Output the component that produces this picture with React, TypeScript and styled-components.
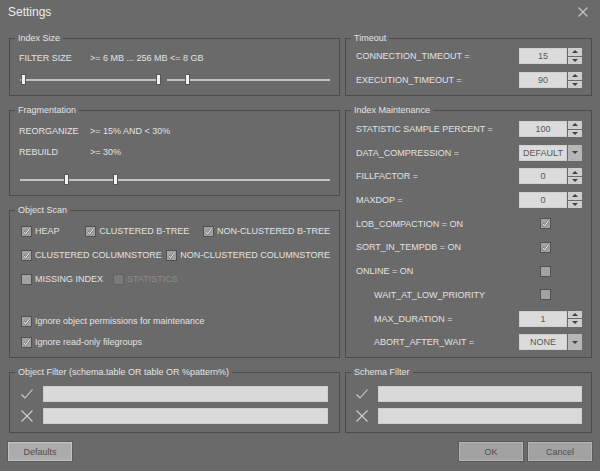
import styled, { createGlobalStyle } from 'styled-components';

const GlobalStyle = createGlobalStyle`
  html, body {
    margin: 0;
    padding: 0;
    background: #6a6a6a;
  }
  body {
    font-family: "Liberation Sans", Arial, sans-serif;
    font-size: 9px;
    color: #e2e2e2;
  }
`;

const Page = styled.div`
  width: 600px;
  height: 471px;
  display: flex;
  flex-direction: column;
  background: #6a6a6a;
`;

const TitleBar = styled.div`
  height: 24px;
  display: flex;
  align-items: center;
  justify-content: space-between;
  padding: 0 12px 0 8px;
`;

const Title = styled.div`
  font-size: 12px;
  color: #ececec;
`;

const Columns = styled.div`
  margin-top: 14px;
  padding: 0 9px;
  display: grid;
  grid-template-columns: 331px 247px;
  grid-template-rows: 58px 86px 148px 61px;
  column-gap: 5px;
  row-gap: 14px;
`;

const Group = styled.div<{ $span?: number }>`
  position: relative;
  border: 1px solid #4b4b4b;
  ${(p) => (p.$span ? `grid-row: span ${p.$span};` : '')}
`;

const Legend = styled.span`
  position: absolute;
  top: -7px;
  left: 5px;
  padding: 0 3px;
  line-height: 12px;
  background: #6a6a6a;
  color: #e4e4e4;
`;

const Body = styled.div<{ $pad: string; $gap?: number }>`
  padding: ${(p) => p.$pad};
  display: flex;
  flex-direction: column;
  gap: ${(p) => p.$gap ?? 0}px;
`;

const TextRow = styled.div`
  display: flex;
  align-items: center;
  height: 14px;
  white-space: nowrap;
`;

const RowLabel = styled.span`
  width: 71px;
`;

const SliderRow = styled.div<{ $top: number }>`
  display: flex;
  gap: 9px;
  margin-top: ${(p) => p.$top}px;
  padding-left: 1px;
`;

const Track = styled.div<{ $width?: number }>`
  position: relative;
  height: 10px;
  ${(p) => (p.$width ? `width: ${p.$width}px;` : 'flex: 1;')}
  &::before {
    content: '';
    position: absolute;
    left: 0;
    right: 0;
    top: 4px;
    height: 2px;
    background: #c2c2c2;
  }
`;

const Thumb = styled.span`
  position: absolute;
  top: 0;
  width: 3px;
  height: 9px;
  margin-left: -1px;
  background: #f2f2f2;
  box-shadow: 0 0 0 1px #575757;
`;

const Slider = ({ width, thumbs }: { width?: number; thumbs: number[] }) => (
  <Track $width={width}>
    {thumbs.map((t) => (
      <Thumb key={t} style={{ left: t }} />
    ))}
  </Track>
);

const CheckRow = styled.div<{ $top?: number }>`
  display: flex;
  align-items: center;
  height: 14px;
  padding-left: 2px;
  ${(p) => (p.$top ? `margin-top: ${p.$top}px;` : '')}
`;

const CheckItem = styled.label<{ $width?: number; $disabled?: boolean }>`
  display: flex;
  align-items: center;
  gap: 3px;
  white-space: nowrap;
  color: ${(p) => (p.$disabled ? '#8c8c8c' : '#e2e2e2')};
  ${(p) => (p.$width ? `width: ${p.$width}px;` : '')}
`;

const Box = styled.span<{ $disabled?: boolean }>`
  width: 11px;
  height: 11px;
  box-sizing: border-box;
  display: inline-flex;
  align-items: center;
  justify-content: center;
  background: ${(p) => (p.$disabled ? '#7a7a7a' : '#a2a2a2')};
  border: 1px solid ${(p) => (p.$disabled ? '#616161' : '#515151')};
  flex: none;
`;

const Check = ({ on, disabled }: { on?: boolean; disabled?: boolean }) => (
  <Box $disabled={disabled}>
    {on && (
      <svg width="9" height="9" viewBox="0 0 9 9">
        <path d="M1.5 4.6 L3.6 6.8 L7.6 1.6" fill="none" stroke="#5a5a5a" strokeWidth="2.2" />
        <path d="M1.5 4.6 L3.6 6.8 L7.6 1.6" fill="none" stroke="#e8e8e8" strokeWidth="1.1" />
      </svg>
    )}
  </Box>
);

const Checkbox = ({ label, on, disabled, width }: { label: string; on?: boolean; disabled?: boolean; width?: number }) => (
  <CheckItem $width={width} $disabled={disabled}>
    <Check on={on} disabled={disabled} />
    {label}
  </CheckItem>
);

const FilterGrid = styled.div<{ $pad: string }>`
  padding: ${(p) => p.$pad};
  display: grid;
  grid-template-columns: 20px 1fr;
  grid-auto-rows: 16px;
  column-gap: 6px;
  row-gap: 6px;
  align-items: center;
  justify-items: center;
`;

const TextInput = styled.div`
  justify-self: stretch;
  height: 16px;
  box-sizing: border-box;
  background: #dadada;
  border: 1px solid #cdcdcd;
`;

const CheckIcon = () => (
  <svg width="12" height="12" viewBox="0 0 12 12">
    <path d="M0.5 6.5 L4 10 L11.5 1.5" fill="none" stroke="#cfcfcf" strokeWidth="1.1" />
  </svg>
);

const CrossIcon = () => (
  <svg width="12" height="12" viewBox="0 0 12 12">
    <path d="M0.5 0.5 L11.5 11.5 M11.5 0.5 L0.5 11.5" fill="none" stroke="#cfcfcf" strokeWidth="1.1" />
  </svg>
);

const CloseIcon = () => (
  <svg width="10" height="10" viewBox="0 0 10 10">
    <path d="M0.5 0.5 L9.5 9.5 M9.5 0.5 L0.5 9.5" fill="none" stroke="#c8c8c8" strokeWidth="1.1" />
  </svg>
);

const ParamList = styled.div<{ $pad: string; $gap: number }>`
  padding: ${(p) => p.$pad};
  display: grid;
  grid-auto-rows: 16px;
  row-gap: ${(p) => p.$gap}px;
`;

const ParamRow = styled.div`
  display: grid;
  grid-template-columns: 1fr 63px;
  align-items: center;
`;

const ParamLabel = styled.span<{ $indent?: boolean }>`
  white-space: nowrap;
  padding-left: ${(p) => (p.$indent ? 18 : 0)}px;
`;

const Control = styled.div`
  display: flex;
  height: 16px;
  gap: 1px;
`;

const Field = styled.div`
  width: 48px;
  height: 16px;
  box-sizing: border-box;
  background: #dbdbdb;
  border: 1px solid #cfcfcf;
  color: #575757;
  display: flex;
  align-items: center;
  justify-content: center;
`;

const SpinButtons = styled.div`
  width: 14px;
  display: flex;
  flex-direction: column;
  gap: 1px;
`;

const Arrow = styled.span<{ $up?: boolean; $dark?: boolean }>`
  flex: 1;
  background: ${(p) => (p.$dark ? '#b6b6b6' : '#cdcdcd')};
  display: flex;
  align-items: center;
  justify-content: center;
  &::after {
    content: '';
    border-left: 3px solid transparent;
    border-right: 3px solid transparent;
    ${(p) => (p.$up ? 'border-bottom: 3px solid #3f3f3f;' : 'border-top: 3px solid #3f3f3f;')}
  }
`;

const CheckCell = styled.div`
  padding-left: 21px;
  display: flex;
`;

type Param =
  | { label: string; kind: 'spin' | 'select'; value: string; indent?: boolean }
  | { label: string; kind: 'check'; on: boolean; indent?: boolean };

const ParamControl = ({ p }: { p: Param }) => {
  if (p.kind === 'check') {
    return (
      <CheckCell>
        <Check on={p.on} />
      </CheckCell>
    );
  }
  return (
    <Control>
      <Field>{p.value}</Field>
      {p.kind === 'spin' ? (
        <SpinButtons>
          <Arrow $up />
          <Arrow />
        </SpinButtons>
      ) : (
        <SpinButtons>
          <Arrow $dark />
        </SpinButtons>
      )}
    </Control>
  );
};

const Footer = styled.div`
  margin-top: 9px;
  padding: 0 8px;
  display: flex;
  gap: 5px;
`;

const Button = styled.button<{ $light?: boolean }>`
  width: 64px;
  height: 19px;
  box-sizing: border-box;
  padding: 0;
  font-family: inherit;
  font-size: 9px;
  color: #4e4e4e;
  background: ${(p) => (p.$light ? '#acacac' : '#a2a2a2')};
  border: 1px solid ${(p) => (p.$light ? '#c3c3c3' : '#b4b4b4')};
  box-shadow: 0 0 0 1px #5a5a5a;
`;

const Spacer = styled.div`
  flex: 1;
`;

const timeout: Param[] = [
  { label: 'CONNECTION_TIMEOUT =', kind: 'spin', value: '15' },
  { label: 'EXECUTION_TIMEOUT =', kind: 'spin', value: '90' },
];

const maintenance: Param[] = [
  { label: 'STATISTIC SAMPLE PERCENT =', kind: 'spin', value: '100' },
  { label: 'DATA_COMPRESSION =', kind: 'select', value: 'DEFAULT' },
  { label: 'FILLFACTOR =', kind: 'spin', value: '0' },
  { label: 'MAXDOP =', kind: 'spin', value: '0' },
  { label: 'LOB_COMPACTION = ON', kind: 'check', on: true },
  { label: 'SORT_IN_TEMPDB = ON', kind: 'check', on: true },
  { label: 'ONLINE = ON', kind: 'check', on: false },
  { label: 'WAIT_AT_LOW_PRIORITY', kind: 'check', on: false, indent: true },
  { label: 'MAX_DURATION =', kind: 'spin', value: '1', indent: true },
  { label: 'ABORT_AFTER_WAIT =', kind: 'select', value: 'NONE', indent: true },
];

const App = () => {
  return (
    <Page>
      <GlobalStyle />
      <TitleBar>
        <Title>Settings</Title>
        <CloseIcon />
      </TitleBar>
      <Columns>
        <Group>
          <Legend>Index Size</Legend>
          <Body $pad="12px 9px 0 9px">
            <TextRow>
              <RowLabel>FILTER SIZE</RowLabel>
              &gt;= 6 MB ... 256 MB &lt;= 8 GB
            </TextRow>
            <SliderRow $top={10}>
              <Slider width={138} thumbs={[3, 138]} />
              <Slider thumbs={[20]} />
            </SliderRow>
          </Body>
        </Group>

        <Group>
          <Legend>Timeout</Legend>
          <ParamList $pad="9px 9px 0 10px" $gap={8}>
            {timeout.map((p) => (
              <ParamRow key={p.label}>
                <ParamLabel>{p.label}</ParamLabel>
                <ParamControl p={p} />
              </ParamRow>
            ))}
          </ParamList>
        </Group>

        <Group>
          <Legend>Fragmentation</Legend>
          <Body $pad="13px 9px 0 9px" $gap={7}>
            <TextRow>
              <RowLabel>REORGANIZE</RowLabel>
              &gt;= 15% AND &lt; 30%
            </TextRow>
            <TextRow>
              <RowLabel>REBUILD</RowLabel>
              &gt;= 30%
            </TextRow>
          </Body>
          <Body $pad="0 9px 0 9px">
            <SliderRow $top={16}>
              <Slider thumbs={[46, 95]} />
            </SliderRow>
          </Body>
        </Group>

        <Group $span={2}>
          <Legend>Index Maintenance</Legend>
          <ParamList $pad="10px 9px 0 10px" $gap={7.7}>
            {maintenance.map((p) => (
              <ParamRow key={p.label}>
                <ParamLabel $indent={p.indent}>{p.label}</ParamLabel>
                <ParamControl p={p} />
              </ParamRow>
            ))}
          </ParamList>
        </Group>

        <Group>
          <Legend>Object Scan</Legend>
          <Body $pad="13px 9px 0 9px" $gap={10}>
            <CheckRow>
              <Checkbox label="HEAP" on width={66} />
              <Checkbox label="CLUSTERED B-TREE" on width={121} />
              <Checkbox label="NON-CLUSTERED B-TREE" on />
            </CheckRow>
            <CheckRow>
              <Checkbox label="CLUSTERED COLUMNSTORE" on width={152} />
              <Checkbox label="NON-CLUSTERED COLUMNSTORE" on />
            </CheckRow>
            <CheckRow>
              <Checkbox label="MISSING INDEX" width={92} />
              <Checkbox label="STATISTICS" disabled />
            </CheckRow>
            <CheckRow $top={18}>
              <Checkbox label="Ignore object permissions for maintenance" on />
            </CheckRow>
            <CheckRow $top={-3}>
              <Checkbox label="Ignore read-only filegroups" on />
            </CheckRow>
          </Body>
        </Group>

        <Group>
          <Legend>Object Filter (schema.table OR table OR %pattern%)</Legend>
          <FilterGrid $pad="13px 11px 0 7px">
            <CheckIcon />
            <TextInput />
            <CrossIcon />
            <TextInput />
          </FilterGrid>
        </Group>

        <Group>
          <Legend>Schema Filter</Legend>
          <FilterGrid $pad="13px 9px 0 6px">
            <CheckIcon />
            <TextInput />
            <CrossIcon />
            <TextInput />
          </FilterGrid>
        </Group>
      </Columns>
      <Footer>
        <Button $light>Defaults</Button>
        <Spacer />
        <Button>OK</Button>
        <Button>Cancel</Button>
      </Footer>
    </Page>
  );
};

export default App;
